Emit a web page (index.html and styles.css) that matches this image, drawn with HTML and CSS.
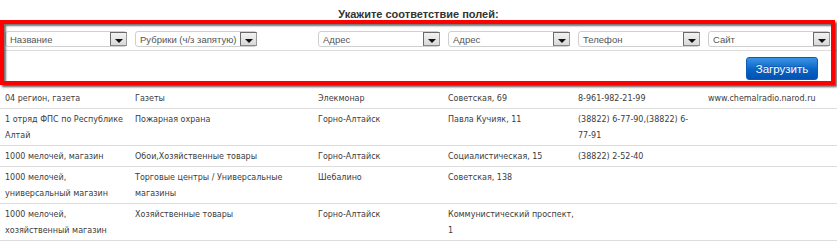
FILE: index.html
```html
<!DOCTYPE html>
<html lang="ru">
<head>
<meta charset="utf-8">
<title>Импорт</title>
<link rel="stylesheet" href="styles.css">
</head>
<body>
<div class="page">
  <div class="title">Укажите соответствие полей:</div>
  <div class="mapping">
    <div class="row head-row">
      <div class="hcell"><div class="select"><span class="sel-text">Название</span><span class="arrow"></span></div></div>
      <div class="hcell"><div class="select"><span class="sel-text">Рубрики (ч/з запятую)</span><span class="arrow"></span></div></div>
      <div class="hcell"><div class="select"><span class="sel-text">Адрес</span><span class="arrow"></span></div></div>
      <div class="hcell"><div class="select"><span class="sel-text">Адрес</span><span class="arrow"></span></div></div>
      <div class="hcell"><div class="select"><span class="sel-text">Телефон</span><span class="arrow"></span></div></div>
      <div class="hcell"><div class="select"><span class="sel-text">Сайт</span><span class="arrow"></span></div></div>
    </div>
    <div class="actions">
      <button class="btn" type="button">Загрузить</button>
    </div>
    <div class="annot"></div>
  </div>
  <div class="row data-row">
    <div class="cell">04 регион, газета</div>
    <div class="cell">Газеты</div>
    <div class="cell">Элекмонар</div>
    <div class="cell">Советская, 69</div>
    <div class="cell">8-961-982-21-99</div>
    <div class="cell">www.chemalradio.narod.ru</div>
  </div>
  <div class="row data-row">
    <div class="cell">1 отряд ФПС по Республике<br>Алтай</div>
    <div class="cell">Пожарная охрана</div>
    <div class="cell">Горно-Алтайск</div>
    <div class="cell">Павла Кучияк, 11</div>
    <div class="cell">(38822) 6-77-90,(38822) 6-<br>77-91</div>
    <div class="cell"></div>
  </div>
  <div class="row data-row">
    <div class="cell">1000 мелочей, магазин</div>
    <div class="cell">Обои,Хозяйственные товары</div>
    <div class="cell">Горно-Алтайск</div>
    <div class="cell">Социалистическая, 15</div>
    <div class="cell">(38822) 2-52-40</div>
    <div class="cell"></div>
  </div>
  <div class="row data-row">
    <div class="cell">1000 мелочей,<br>универсальный магазин</div>
    <div class="cell">Торговые центры / Универсальные<br>магазины</div>
    <div class="cell">Шебалино</div>
    <div class="cell">Советская, 138</div>
    <div class="cell"></div>
    <div class="cell"></div>
  </div>
  <div class="row data-row">
    <div class="cell">1000 мелочей,<br>хозяйственный магазин</div>
    <div class="cell">Хозяйственные товары</div>
    <div class="cell">Горно-Алтайск</div>
    <div class="cell">Коммунистический проспект,<br>1</div>
    <div class="cell"></div>
    <div class="cell"></div>
  </div>
</div>
</body>
</html>
```

FILE: styles.css
```css
html, body {
  margin: 0;
  padding: 0;
  background: #ffffff;
}

.page {
  width: 837px;
  font-family: "DejaVu Sans", Verdana, sans-serif;
  color: #3c3c3c;
}

.title {
  height: 24px;
  padding-top: 4px;
  box-sizing: border-box;
  line-height: 20px;
  text-align: center;
  font-family: "Liberation Sans", Arial, sans-serif;
  font-weight: bold;
  font-size: 11px;
  color: #333333;
}

.row {
  display: grid;
  grid-template-columns: 130px 183px 130px 130px 130px 134px;
}

.mapping {
  position: relative;
}

.head-row {
  padding: 7px 0 3px;
  border-bottom: 1px solid #dddddd;
}

.hcell {
  padding-left: 5px;
}

.select {
  width: 122px;
  height: 16px;
  box-sizing: border-box;
  border: 1px solid #cfcfcf;
  border-radius: 3px;
  background: #ffffff;
  display: flex;
  align-items: center;
  justify-content: space-between;
  padding-left: 4px;
  font-family: "Liberation Sans", Arial, sans-serif;
  font-size: 9.5px;
  color: #555555;
}

.sel-text {
  white-space: nowrap;
}

.arrow {
  flex: none;
  width: 17px;
  height: 14px;
  box-sizing: border-box;
  margin-right: -1px;
  border: 1px solid #6a6a6a;
  border-right-color: #9a9a9a;
  border-bottom-color: #8a8a8a;
  background: linear-gradient(#f2f2f2, #d9d9d9);
  display: flex;
  align-items: flex-end;
  justify-content: center;
  padding-bottom: 2px;
}

.arrow::after {
  content: "";
  width: 0;
  height: 0;
  border-left: 4px solid transparent;
  border-right: 4px solid transparent;
  border-top: 4px solid #111111;
}

.actions {
  display: flex;
  justify-content: flex-end;
  padding: 6px 19px 8px 0;
}

.btn {
  width: 72px;
  height: 23px;
  box-sizing: border-box;
  border: 1px solid #0b5cb4;
  border-radius: 3px;
  background: linear-gradient(#3b93e6, #0a63c6 55%, #0052b4);
  color: #ffffff;
  font-family: "Liberation Sans", Arial, sans-serif;
  font-size: 11.5px;
  padding: 0;
  text-shadow: 0 -1px 0 rgba(0, 0, 0, 0.25);
}

.annot {
  position: absolute;
  left: 0;
  top: -4px;
  width: 835px;
  height: 65px;
  box-sizing: border-box;
  border: 4px solid #ff0000;
  box-shadow: 2px 2px 2px rgba(0, 0, 0, 0.65), inset 2px 2px 2px rgba(0, 0, 0, 0.55);
  pointer-events: none;
}

.data-row {
  border-bottom: 1px solid #dddddd;
}

.cell {
  padding: 3px 0 1px 5px;
  line-height: 16px;
  font-size: 8px;
  white-space: nowrap;
}
```
